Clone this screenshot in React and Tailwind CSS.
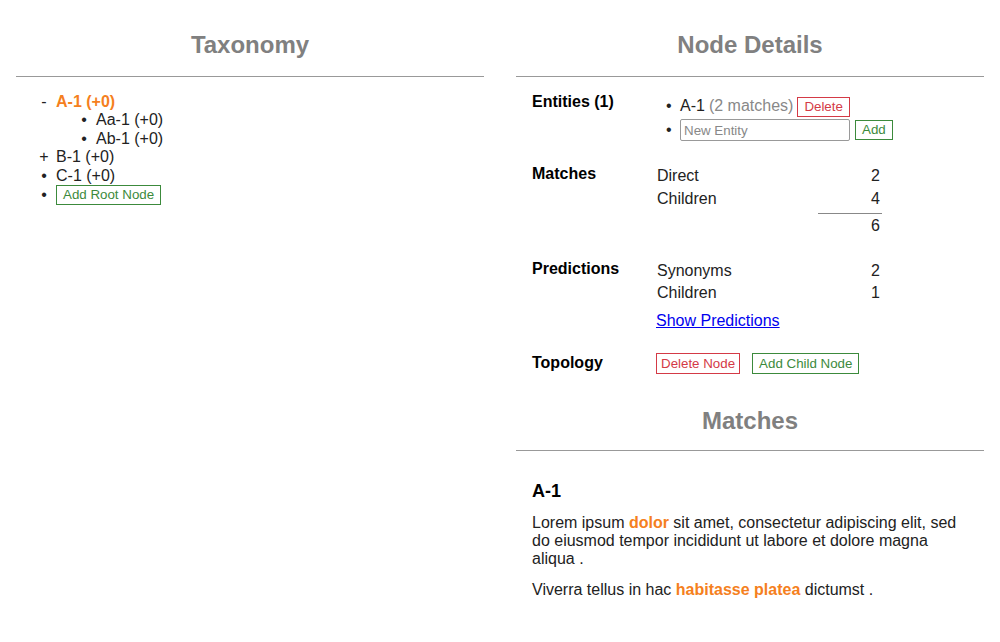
import { useState } from 'react'

const orange = 'text-[#f57f20]'

function TreeRow({ marker, children, className = '' }) {
  return (
    <li className={`flex items-center h-[18.4px] ${className}`}>
      <span className="w-3 text-center mr-[6px]">{marker}</span>
      {children}
    </li>
  )
}

function Taxonomy() {
  return (
    <section className="w-1/2 px-4">
      <h2 className="text-center text-[24px] font-bold text-[#808080] pt-[31px] pb-[17px] leading-[28px]">Taxonomy</h2>
      <hr className="border-t border-[#999]" />
      <ul className="pl-[22px] pt-[16px] text-[16px] text-[#222]">
        <TreeRow marker="-">
          <span className={`${orange} font-bold`}>A-1 (+0)</span>
        </TreeRow>
        <li>
          <ul className="pl-[40px]">
            <TreeRow marker="•">Aa-1 (+0)</TreeRow>
            <TreeRow marker="•">Ab-1 (+0)</TreeRow>
          </ul>
        </li>
        <TreeRow marker="+">B-1 (+0)</TreeRow>
        <TreeRow marker="•">C-1 (+0)</TreeRow>
        <li className="flex items-center h-[20px]">
          <span className="w-3 text-center mr-[6px]">•</span>
          <button
            type="button"
            className="border border-[#3c8a3c] text-[#3c8a3c] text-[13.33px] px-[6px] h-[20px] leading-[18px]"
          >
            Add Root Node
          </button>
        </li>
      </ul>
    </section>
  )
}

function Label({ children }) {
  return <div className="w-[125px] shrink-0 font-bold text-[16px] text-black">{children}</div>
}

function Details() {
  const [entity, setEntity] = useState('')
  return (
    <section className="w-1/2 px-4">
      <h2 className="text-center text-[24px] font-bold text-[#808080] pt-[31px] pb-[17px] leading-[28px]">Node Details</h2>
      <hr className="border-t border-[#999]" />
      <div className="px-4 text-[16px] text-[#222]">
        <div className="flex pt-[16px]">
          <Label>Entities (1)</Label>
          <ul className="pl-[9px]">
            <li className="flex items-center h-[21px] mt-[3px]">
              <span className="w-[14px]">•</span>
              <span>A-1</span>
              <span className="text-[#888] ml-[4px]">(2 matches)</span>
              <button
                type="button"
                className="ml-[4px] border border-[#d43a46] text-[#d43a46] text-[13.33px] px-[6px] h-[20px] leading-[18px]"
              >
                Delete
              </button>
            </li>
            <li className="flex items-center h-[22px] mt-[2px]">
              <span className="w-[14px]">•</span>
              <input
                value={entity}
                onChange={(e) => setEntity(e.target.value)}
                placeholder="New Entity"
                className="w-[170px] h-[22px] border border-[#999] rounded-[2px] px-[3px] text-[13.33px] placeholder:text-[#888] outline-none"
              />
              <button
                type="button"
                className="ml-[5px] border border-[#3c8a3c] text-[#3c8a3c] text-[13.33px] px-[6px] h-[20px] leading-[18px]"
              >
                Add
              </button>
            </li>
          </ul>
        </div>

        <div className="flex pt-[24px]">
          <Label>Matches</Label>
          <div className="w-[225px] pt-[2px]">
            <div className="flex justify-between h-[23px]"><span>Direct</span><span className="pr-[2px]">2</span></div>
            <div className="flex justify-between h-[23px]"><span>Children</span><span className="pr-[2px]">4</span></div>
            <div className="flex justify-end"><div className="w-[64px] border-t border-[#888] text-right pt-[3px] pr-[2px]">6</div></div>
          </div>
        </div>

        <div className="flex pt-[25px]">
          <Label>Predictions</Label>
          <div className="w-[225px] pt-[2px]">
            <div className="flex justify-between h-[22px]"><span>Synonyms</span><span className="pr-[2px]">2</span></div>
            <div className="flex justify-between h-[22px]"><span>Children</span><span className="pr-[2px]">1</span></div>
            <a href="#" className="inline-block mt-[6px] -ml-[1px] text-[#0000ee] underline">Show Predictions</a>
          </div>
        </div>

        <div className="flex pt-[22px] items-center">
          <Label>Topology</Label>
          <div className="flex gap-[12px] -ml-[1px]">
            <button
              type="button"
              className="border border-[#d43a46] text-[#d43a46] text-[13.33px] px-[4px] h-[21px] leading-[19px]"
            >
              Delete Node
            </button>
            <button
              type="button"
              className="border border-[#3c8a3c] text-[#3c8a3c] text-[13.33px] px-[6px] h-[21px] leading-[19px]"
            >
              Add Child Node
            </button>
          </div>
        </div>
      </div>

      <h2 className="text-center text-[24px] font-bold text-[#808080] pt-[33px] pb-[15px] leading-[28px]">Matches</h2>
      <hr className="border-t border-[#999]" />
      <div className="px-4 text-[16px] text-[#222] leading-[18px]">
        <h3 className="text-[18px] font-bold text-black pt-[30px] leading-[21px]">A-1</h3>
        <p className="mt-[12px] leading-[18px]">
          Lorem ipsum <b className={orange}>dolor</b> sit amet, consectetur adipiscing elit, sed do eiusmod tempor
          incididunt ut labore et dolore magna aliqua .
        </p>
        <p className="mt-[13px]">
          Viverra tellus in hac <b className={orange}>habitasse platea</b> dictumst .
        </p>
      </div>
    </section>
  )
}

export default function App() {
  return (
    <div className="min-h-screen bg-white flex font-['Liberation_Sans',Arial,sans-serif] leading-[1.15]">
      <Taxonomy />
      <Details />
    </div>
  )
}
